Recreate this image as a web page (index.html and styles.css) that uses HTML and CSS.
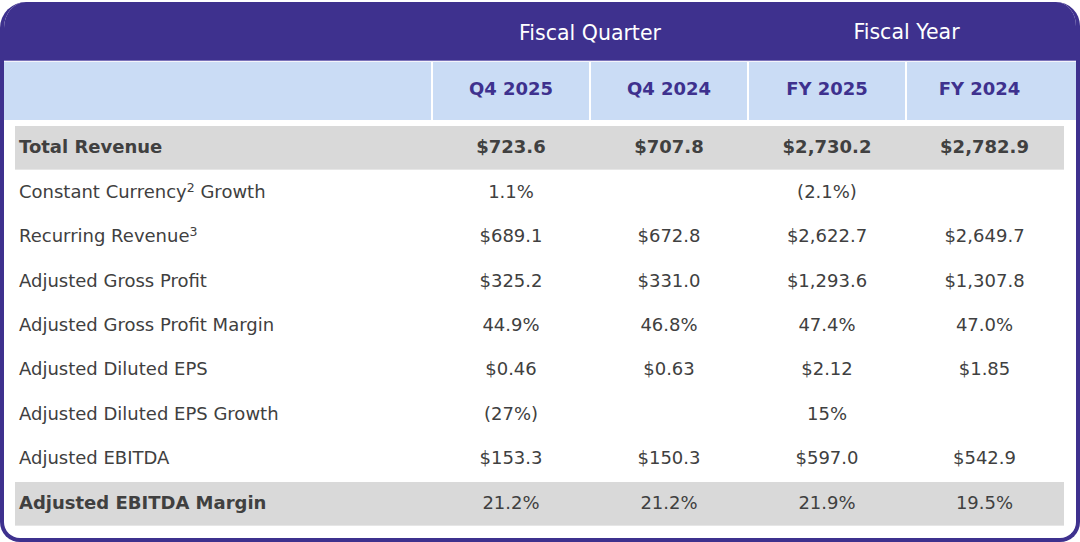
FILE: index.html
```html
<!DOCTYPE html>
<html>
<head>
<meta charset="utf-8">
<link rel="stylesheet" href="styles.css">
</head>
<body>
<div class="card">
  <div class="band">
    <div class="band-title quarter">Fiscal Quarter</div>
    <div class="band-title year">Fiscal Year</div>
  </div>
  <div class="sep"></div>
  <div class="colhead">
    <div class="ch"></div>
    <div class="ch">Q4 2025</div>
    <div class="ch">Q4 2024</div>
    <div class="ch">FY 2025</div>
    <div class="ch last">FY 2024</div>
  </div>
  <div class="rows">
    <div class="row shaded bold">
      <div class="label">Total Revenue</div>
      <div class="val">$723.6</div><div class="val">$707.8</div><div class="val">$2,730.2</div><div class="val">$2,782.9</div>
    </div>
    <div class="row">
      <div class="label">Constant Currency<sup>2</sup> Growth</div>
      <div class="val">1.1%</div><div class="val"></div><div class="val">(2.1%)</div><div class="val"></div>
    </div>
    <div class="row">
      <div class="label">Recurring Revenue<sup>3</sup></div>
      <div class="val">$689.1</div><div class="val">$672.8</div><div class="val">$2,622.7</div><div class="val">$2,649.7</div>
    </div>
    <div class="row">
      <div class="label">Adjusted Gross Profit</div>
      <div class="val">$325.2</div><div class="val">$331.0</div><div class="val">$1,293.6</div><div class="val">$1,307.8</div>
    </div>
    <div class="row">
      <div class="label">Adjusted Gross Profit Margin</div>
      <div class="val">44.9%</div><div class="val">46.8%</div><div class="val">47.4%</div><div class="val">47.0%</div>
    </div>
    <div class="row">
      <div class="label">Adjusted Diluted EPS</div>
      <div class="val">$0.46</div><div class="val">$0.63</div><div class="val">$2.12</div><div class="val">$1.85</div>
    </div>
    <div class="row">
      <div class="label">Adjusted Diluted EPS Growth</div>
      <div class="val">(27%)</div><div class="val"></div><div class="val">15%</div><div class="val"></div>
    </div>
    <div class="row">
      <div class="label">Adjusted EBITDA</div>
      <div class="val">$153.3</div><div class="val">$150.3</div><div class="val">$597.0</div><div class="val">$542.9</div>
    </div>
    <div class="row shaded">
      <div class="label strong">Adjusted EBITDA Margin</div>
      <div class="val">21.2%</div><div class="val">21.2%</div><div class="val">21.9%</div><div class="val">19.5%</div>
    </div>
  </div>
</div>
</body>
</html>
```

FILE: styles.css
```css
html, body {
  margin: 0;
  padding: 0;
  background: #ffffff;
}
body {
  font-family: "DejaVu Sans", Verdana, sans-serif;
  color: #404040;
}
.card {
  box-sizing: border-box;
  width: 1080px;
  height: 540px;
  margin-top: 2px;
  border: 4px solid #3e318e;
  border-top-width: 0;
  border-radius: 26px 24px 20px 20px;
  overflow: hidden;
  background: #ffffff;
}
.band {
  height: 58px;
  background: #3e318e;
  display: grid;
  grid-template-columns: 427px 156px 156px 156px 1fr;
  column-gap: 2px;
  align-items: center;
}
.band-title {
  color: #ffffff;
  font-size: 20.5px;
  text-align: center;
  padding-top: 4px;
}
.band-title.quarter {
  grid-column: 2 / 4;
}
.band-title.year {
  grid-column: 4 / 6;
  padding-right: 12px;
  padding-top: 1px;
}
.sep {
  height: 1px;
  background: #7b72b9;
  border-bottom: 1px solid #f4f4fb;
}
.colhead {
  display: grid;
  grid-template-columns: 427px 156px 156px 156px 1fr;
  column-gap: 2px;
  background: #ffffff;
  height: 58px;
}
.ch {
  background: #cadcf5;
  color: #3e318e;
  font-weight: bold;
  font-size: 18px;
  display: flex;
  align-items: center;
  justify-content: center;
  padding-bottom: 6px;
}
.ch.last {
  padding-right: 24px;
}
.rows {
  padding: 6px 12px 0 11px;
}
.row {
  box-sizing: border-box;
  display: grid;
  grid-template-columns: 417px 158px 158px 158px 157px;
  height: 44.45px;
  padding-bottom: 3px;
  align-items: center;
  font-size: 18px;
}
.row.shaded {
  background: #d9d9d9;
  box-shadow: inset 0 -1px 0 #e6e6e6;
}
.row.bold {
  font-weight: bold;
}
.label {
  padding-left: 4px;
  white-space: nowrap;
}
.label.strong {
  font-weight: bold;
}
.label sup {
  font-size: 12.5px;
  line-height: 0;
  vertical-align: 6px;
}
.val {
  text-align: center;
  white-space: nowrap;
}
```
